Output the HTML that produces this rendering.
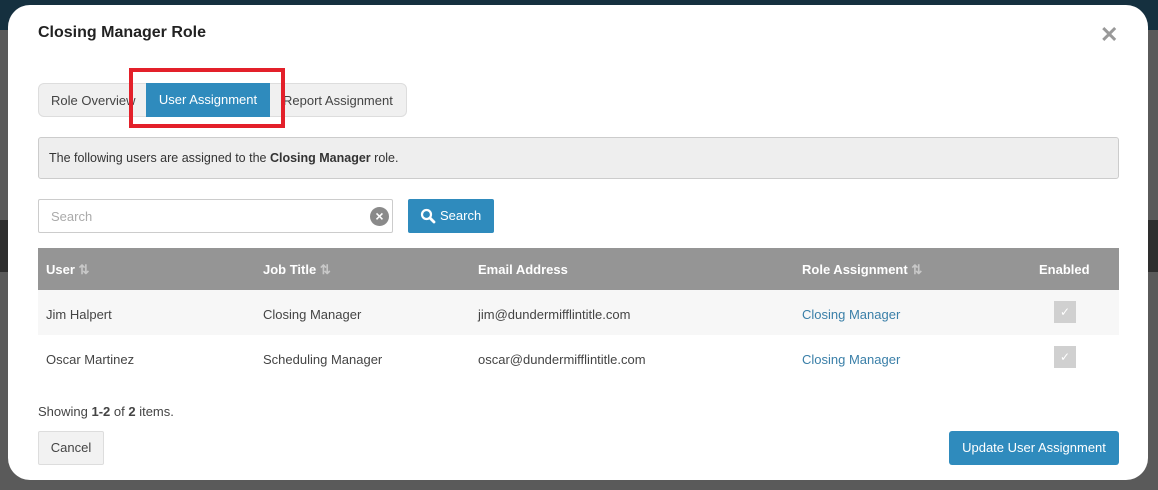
<!DOCTYPE html>
<html><head><style>
*{box-sizing:border-box;margin:0;padding:0}
body{width:1158px;height:490px;overflow:hidden;background:#5a5a5a;font-family:"Liberation Sans",sans-serif;font-size:13px;color:#333;position:relative}
body>div{position:absolute}
.topbar{left:0;top:0;width:1158px;height:30px;background:#15303f}
.dark{left:0;top:220px;width:1158px;height:52px;background:#2e2e2e}
.modal{left:8px;top:5px;width:1140px;height:475px;background:#fff;border-radius:22px}
.title{left:38px;top:24px;font-size:16px;font-weight:bold;color:#222}
.close{left:1100px;top:22px;font-size:22px;color:#999;font-weight:bold}
.tabs{left:38px;top:83px;width:369px;height:34px;background:#f0f0f0;border:1px solid #ddd;border-radius:6px}
.tab{top:93px;font-size:13px;color:#444}
.tabact{left:146px;top:83px;width:124px;height:34px;background:#2f8bbd;color:#fff;text-align:center;line-height:34px;font-size:13px}
.red{left:129px;top:68px;width:156px;height:60px;border:4px solid #e3202a}
.info{left:38px;top:137px;width:1081px;height:42px;background:#eee;border:1px solid #ccc;border-radius:3px;padding:13px 10px;font-size:12.5px}
.search{left:38px;top:199px;width:355px;height:34px;border:1px solid #ccc;border-radius:2px;padding:9px 12px;color:#aaa}
.clr{left:370px;top:207px;width:19px;height:19px;border-radius:50%;background:#8a8a8a;color:#fff;font-size:14px;line-height:19px;text-align:center;font-weight:bold}
.sbtn{left:408px;top:199px;width:86px;height:34px;background:#2f8bbd;border-radius:2px;color:#fff;line-height:34px;padding-left:32px;font-size:13px}
.thead{left:38px;top:248px;width:1081px;height:42px;background:#959595}
.th{top:262px;color:#fff;font-weight:bold;font-size:13px}
.sort{color:#c8c8c8}
.row1{left:38px;top:290px;width:1081px;height:45px;background:#f7f7f7}
.td{font-size:13px;color:#444}
.link{color:#3a7fa8}
.cb{left:1054px;width:22px;height:22px;background:#d0d0d0;color:#fff;text-align:center;line-height:22px;font-size:12px}
.cancel{left:38px;top:431px;width:66px;height:34px;background:#f2f2f2;border:1px solid #ddd;border-radius:2px;text-align:center;line-height:32px;color:#444}
.upd{left:949px;top:431px;width:170px;height:34px;background:#2f8bbd;border-radius:3px;color:#fff;text-align:center;line-height:34px}
</style></head><body>
<div class="topbar"></div><div class="dark"></div>
<div class="modal"></div>
<div class="title">Closing Manager Role</div>
<div class="close">✕</div>
<div class="tabs"></div>
<div class="tab" style="left:51px">Role Overview</div>
<div class="tab" style="left:283px">Report Assignment</div>
<div class="tabact">User Assignment</div>
<div class="red"></div>
<div class="info">The following users are assigned to the <b>Closing Manager</b> role.</div>
<div class="search">Search</div>
<div class="clr">×</div>
<div class="sbtn">Search</div>
<svg style="position:absolute;left:420px;top:208px" width="16" height="16" viewBox="0 0 16 16"><circle cx="6.5" cy="6.5" r="4.5" fill="none" stroke="#fff" stroke-width="2.2"/><path d="M10 10 L14 14" stroke="#fff" stroke-width="2.8" stroke-linecap="round"/></svg>
<div class="thead"></div>
<div class="th" style="left:46px">User <span class="sort">⇅</span></div>
<div class="th" style="left:263px">Job Title <span class="sort">⇅</span></div>
<div class="th" style="left:478px">Email Address</div>
<div class="th" style="left:802px">Role Assignment <span class="sort">⇅</span></div>
<div class="th" style="left:1039px">Enabled</div>
<div class="row1"></div>
<div class="td" style="left:46px;top:307px">Jim Halpert</div>
<div class="td" style="left:263px;top:307px">Closing Manager</div>
<div class="td" style="left:478px;top:307px">jim@dundermifflintitle.com</div>
<div class="td link" style="left:802px;top:307px">Closing Manager</div>
<div class="cb" style="top:301px">✓</div>
<div class="td" style="left:46px;top:352px">Oscar Martinez</div>
<div class="td" style="left:263px;top:352px">Scheduling Manager</div>
<div class="td" style="left:478px;top:352px">oscar@dundermifflintitle.com</div>
<div class="td link" style="left:802px;top:352px">Closing Manager</div>
<div class="cb" style="top:346px">✓</div>
<div class="td" style="left:38px;top:404px">Showing <b>1-2</b> of <b>2</b> items.</div>
<div class="cancel">Cancel</div>
<div class="upd">Update User Assignment</div>
</body></html>
